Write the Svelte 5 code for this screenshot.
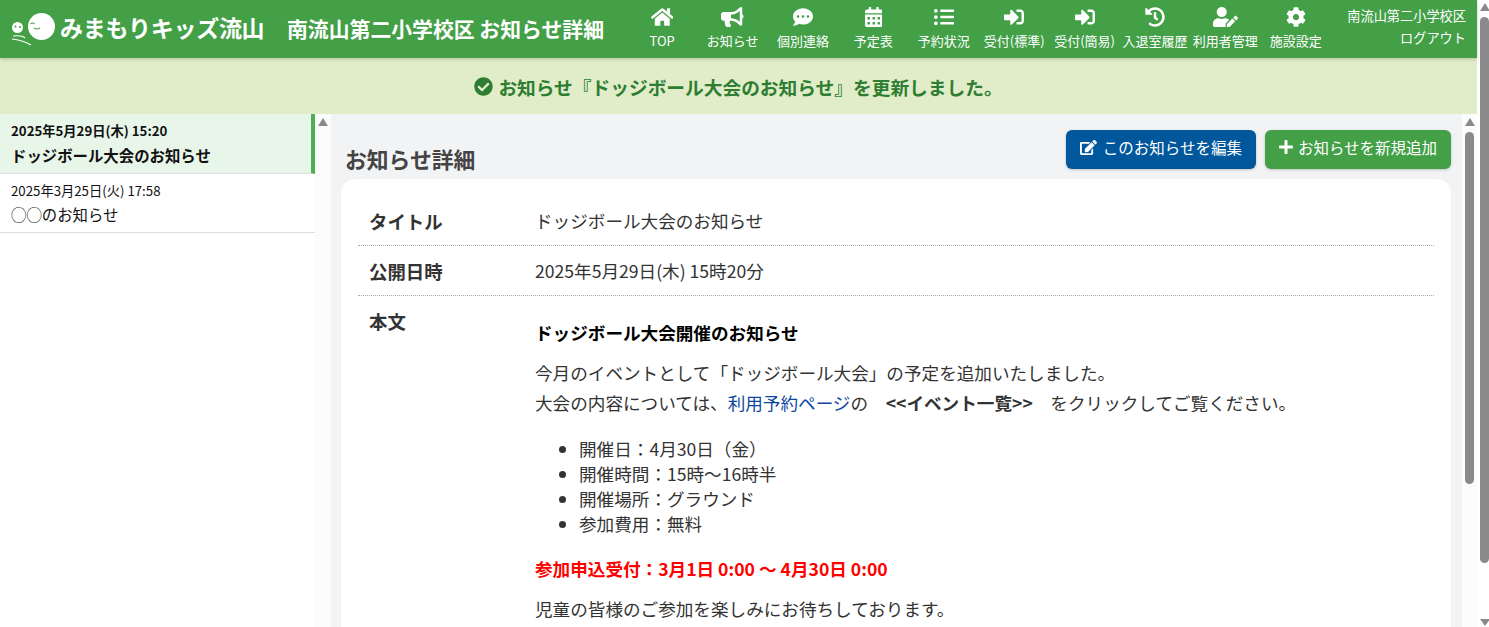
<script>
  const icons = {
    home: [576, "M280.37 148.26L96 300.11V464a16 16 0 0 0 16 16l112.06-.29a16 16 0 0 0 15.92-16V368a16 16 0 0 1 16-16h64a16 16 0 0 1 16 16v95.64a16 16 0 0 0 16 16.05L464 480a16 16 0 0 0 16-16V300L295.67 148.26a12.19 12.19 0 0 0-15.3 0zM571.6 251.47L488 182.56V44.05a12 12 0 0 0-12-12h-56a12 12 0 0 0-12 12v72.61L318.47 43a48 48 0 0 0-61 0L4.34 251.47a12 12 0 0 0-1.6 16.9l25.5 31A12 12 0 0 0 45.15 301l235.22-193.74a12.19 12.19 0 0 1 15.3 0L530.9 301a12 12 0 0 0 16.9-1.6l25.5-31a12 12 0 0 0-1.7-16.93z"],
    bullhorn: [576, "M576 240c0-23.63-12.95-44.04-32-55.12V32.01C544 23.26 537.02 0 512 0c-7.12 0-14.19 2.38-19.98 7.02l-85.03 68.03C364.28 109.19 310.66 128 256 128H64c-35.35 0-64 28.65-64 64v96c0 35.35 28.65 64 64 64h33.7c-1.39 10.48-2.18 21.14-2.18 32 0 39.77 9.26 77.35 25.56 110.94 5.19 10.69 16.52 17.06 28.4 17.06h74.28c26.05 0 41.69-29.84 25.9-50.56-16.4-21.52-26.15-48.36-26.15-77.44 0-11.11 1.62-21.79 4.41-32H256c54.66 0 108.28 18.81 150.98 52.95l85.03 68.03a32.023 32.023 0 0 0 19.98 7.02c24.92 0 32-22.78 32-32V295.13C563.05 284.04 576 263.63 576 240zm-96 141.42l-33.05-26.44C392.95 311.78 325.12 288 256 288v-96c69.12 0 136.95-23.78 190.95-66.98L480 98.58v282.84z"],
    comment: [512, "M256 32C114.6 32 0 125.1 0 240c0 49.6 21.4 95 57 130.7C44.5 421.1 2.7 466 2.2 466.5c-2.2 2.3-2.8 5.7-1.5 8.7S4.8 480 8 480c66.3 0 116-31.8 140.6-51.4 32.7 12.3 69 19.4 107.4 19.4 141.4 0 256-93.1 256-208S397.4 32 256 32zM128 272c-17.7 0-32-14.3-32-32s14.3-32 32-32 32 14.3 32 32-14.3 32-32 32zm128 0c-17.7 0-32-14.3-32-32s14.3-32 32-32 32 14.3 32 32-14.3 32-32 32zm128 0c-17.7 0-32-14.3-32-32s14.3-32 32-32 32 14.3 32 32-14.3 32-32 32z"],
    calendar: [448, "M0 464c0 26.5 21.5 48 48 48h352c26.5 0 48-21.5 48-48V192H0v272zm320-196c0-6.6 5.4-12 12-12h40c6.6 0 12 5.4 12 12v40c0 6.6-5.4 12-12 12h-40c-6.6 0-12-5.4-12-12v-40zm0 128c0-6.6 5.4-12 12-12h40c6.6 0 12 5.4 12 12v40c0 6.6-5.4 12-12 12h-40c-6.6 0-12-5.4-12-12v-40zM192 268c0-6.6 5.4-12 12-12h40c6.6 0 12 5.4 12 12v40c0 6.6-5.4 12-12 12h-40c-6.6 0-12-5.4-12-12v-40zm0 128c0-6.6 5.4-12 12-12h40c6.6 0 12 5.4 12 12v40c0 6.6-5.4 12-12 12h-40c-6.6 0-12-5.4-12-12v-40zM64 268c0-6.6 5.4-12 12-12h40c6.6 0 12 5.4 12 12v40c0 6.6-5.4 12-12 12H76c-6.6 0-12-5.4-12-12v-40zm0 128c0-6.6 5.4-12 12-12h40c6.6 0 12 5.4 12 12v40c0 6.6-5.4 12-12 12H76c-6.6 0-12-5.4-12-12v-40zM400 64h-48V16c0-8.8-7.2-16-16-16h-32c-8.8 0-16 7.2-16 16v48H160V16c0-8.8-7.2-16-16-16h-32c-8.8 0-16 7.2-16 16v48H48C21.5 64 0 85.5 0 112v48h448v-48c0-26.5-21.5-48-48-48z"],
    list: [512, "M48 48a48 48 0 1 0 48 48 48 48 0 0 0-48-48zm0 160a48 48 0 1 0 48 48 48 48 0 0 0-48-48zm0 160a48 48 0 1 0 48 48 48 48 0 0 0-48-48zm448 16H176a16 16 0 0 0-16 16v32a16 16 0 0 0 16 16h320a16 16 0 0 0 16-16v-32a16 16 0 0 0-16-16zm0-320H176a16 16 0 0 0-16 16v32a16 16 0 0 0 16 16h320a16 16 0 0 0 16-16V80a16 16 0 0 0-16-16zm0 160H176a16 16 0 0 0-16 16v32a16 16 0 0 0 16 16h320a16 16 0 0 0 16-16v-32a16 16 0 0 0-16-16z"],
    signin: [512, "M416 448h-84c-6.6 0-12-5.4-12-12v-40c0-6.6 5.4-12 12-12h84c17.7 0 32-14.3 32-32V160c0-17.7-14.3-32-32-32h-84c-6.6 0-12-5.4-12-12V76c0-6.6 5.4-12 12-12h84c53 0 96 43 96 96v192c0 53-43 96-96 96zm-47-201L201 79c-15-15-41-4.5-41 17v96H24c-13.3 0-24 10.7-24 24v96c0 13.3 10.7 24 24 24h136v96c0 21.5 26 32 41 17l168-168c9.3-9.4 9.3-24.6 0-34z"],
    history: [512, "M504 255.531c.253 136.64-111.18 248.372-247.82 248.468-59.015.042-113.223-20.53-155.822-54.911-11.077-8.94-11.905-25.541-1.839-35.607l11.267-11.267c8.609-8.609 22.353-9.551 31.891-1.984C173.062 425.135 212.781 440 256 440c101.705 0 184-82.311 184-184 0-101.705-82.311-184-184-184-48.814 0-93.149 18.969-126.068 49.932l50.754 50.754c10.08 10.08 2.941 27.314-11.313 27.314H24c-8.837 0-16-7.163-16-16V38.627c0-14.254 17.234-21.393 27.314-11.314l49.372 49.372C129.209 34.136 189.552 8 256 8c136.81 0 247.747 110.78 248 247.531zm-180.912 78.784l9.823-12.63c8.138-10.463 6.253-25.542-4.21-33.679L288 256.349V152c0-13.255-10.745-24-24-24h-16c-13.255 0-24 10.745-24 24v135.651l65.409 50.874c10.463 8.137 25.541 6.253 33.679-4.21z"],
    useredit: [640, "M224 256c70.7 0 128-57.3 128-128S294.7 0 224 0 96 57.3 96 128s57.3 128 128 128zm89.6 32h-16.7c-22.2 10.2-46.9 16-72.9 16s-50.6-5.8-72.9-16h-16.7C60.2 288 0 348.2 0 422.4V464c0 26.5 21.5 48 48 48h274.9c-2.4-6.8-3.4-14-2.6-21.3l6.8-60.9 1.2-11.1 7.9-7.9 77.3-77.3c-24.5-27.7-60-45.5-99.9-45.5zm45.3 145.3l-6.8 61c-1.1 10.2 7.5 18.8 17.6 17.6l60.9-6.8 137.9-137.9-71.7-71.7-137.9 137.8zM633 268.9L595.1 231c-9.3-9.3-24.5-9.3-33.8 0l-37.8 37.8-4.1 4.1 71.8 71.7 41.8-41.8c9.3-9.4 9.3-24.5 0-33.9z"],
    cog: [512, "M487.4 315.7l-42.6-24.6c4.3-23.2 4.3-47 0-70.2l42.6-24.6c4.9-2.8 7.1-8.6 5.5-14-11.1-35.6-30-67.8-54.7-94.6-3.8-4.1-10-5.1-14.8-2.3L380.8 110c-17.9-15.4-38.5-27.3-60.8-35.1V25.8c0-5.6-3.9-10.5-9.4-11.7-36.7-8.2-74.3-7.8-109.2 0-5.5 1.2-9.4 6.1-9.4 11.7V75c-22.2 7.9-42.8 19.8-60.8 35.1L88.7 85.5c-4.9-2.8-11-1.9-14.8 2.3-24.7 26.7-43.6 58.9-54.7 94.6-1.7 5.4.6 11.2 5.5 14L67.3 221c-4.3 23.2-4.3 47 0 70.2l-42.6 24.6c-4.9 2.8-7.1 8.6-5.5 14 11.1 35.6 30 67.8 54.7 94.6 3.8 4.1 10 5.1 14.8 2.3l42.6-24.6c17.9 15.4 38.5 27.3 60.8 35.1v49.2c0 5.6 3.9 10.5 9.4 11.7 36.7 8.2 74.3 7.8 109.2 0 5.5-1.2 9.4-6.1 9.4-11.7v-49.2c22.2-7.9 42.8-19.8 60.8-35.1l42.6 24.6c4.9 2.8 11 1.9 14.8-2.3 24.7-26.7 43.6-58.9 54.7-94.6 1.5-5.5-.7-11.3-5.6-14.1zM256 336c-44.1 0-80-35.9-80-80s35.9-80 80-80 80 35.9 80 80-35.9 80-80 80z"],
    check: [512, "M504 256c0 136.967-111.033 248-248 248S8 392.967 8 256 119.033 8 256 8s248 111.033 248 248zM227.314 387.314l184-184c6.248-6.248 6.248-16.379 0-22.627l-22.627-22.627c-6.248-6.249-16.379-6.249-22.628 0L216 308.118l-70.059-70.059c-6.248-6.248-16.379-6.248-22.628 0l-22.627 22.627c-6.248 6.248-6.248 16.379 0 22.627l104 104c6.249 6.249 16.379 6.249 22.628.001z"],
    edit: [576, "M402.6 83.2l90.2 90.2c3.8 3.8 3.8 10 0 13.8L274.4 405.6l-92.8 10.3c-12.4 1.4-22.9-9.1-21.5-21.5l10.3-92.8L388.8 83.2c3.8-3.8 10-3.8 13.8 0zm162-22.9l-48.8-48.8c-15.2-15.2-39.9-15.2-55.2 0l-35.4 35.4c-3.8 3.8-3.8 10 0 13.8l90.2 90.2c3.8 3.8 10 3.8 13.8 0l35.4-35.4c15.2-15.3 15.2-40 0-55.2zM384 346.2V448H64V128h229.8c3.2 0 6.2-1.3 8.5-3.5l40-40c7.6-7.6 2.2-20.5-8.5-20.5H48C21.5 64 0 85.5 0 112v352c0 26.5 21.5 48 48 48h352c26.5 0 48-21.5 48-48V306.2c0-10.7-12.9-16-20.5-8.5l-40 40c-2.2 2.3-3.5 5.3-3.5 8.5z"],
    plus: [448, "M416 208H272V64c0-17.67-14.33-32-32-32h-32c-17.67 0-32 14.33-32 32v144H32c-17.67 0-32 14.33-32 32v32c0 17.67 14.33 32 32 32h144v144c0 17.67 14.33 32 32 32h32c17.67 0 32-14.33 32-32V304h144c17.67 0 32-14.33 32-32v-32c0-17.67-14.33-32-32-32z"]
  };

  const nav = [
    ["home", "TOP"],
    ["bullhorn", "お知らせ"],
    ["comment", "個別連絡"],
    ["calendar", "予定表"],
    ["list", "予約状況"],
    ["signin", "受付(標準)"],
    ["signin", "受付(簡易)"],
    ["history", "入退室履歴"],
    ["useredit", "利用者管理"],
    ["cog", "施設設定"]
  ];

  const notices = [
    { date: "2025年5月29日(木) 15:20", title: "ドッジボール大会のお知らせ", active: true },
    { date: "2025年3月25日(火) 17:58", title: "◯◯のお知らせ", active: false }
  ];

  const details = ["開催日：4月30日（金）", "開催時間：15時～16時半", "開催場所：グラウンド", "参加費用：無料"];
</script>

{#snippet icon(name, cls)}
  <svg class={cls} viewBox="0 0 {icons[name][0]} 512" aria-hidden="true"><path fill="currentColor" d={icons[name][1]} /></svg>
{/snippet}

<div class="screen">
  <div class="page">
    <header class="topbar">
      <div class="logo">
        <svg class="mascot" viewBox="0 0 46 33" aria-hidden="true">
          <ellipse cx="31.5" cy="13.5" rx="13.5" ry="13.5" fill="#fff" />
          <circle cx="7.5" cy="14.5" r="5.5" fill="#fff" />
          <path d="M20.5 11q2 -2 4 0M24 15q3 2 6 0" stroke="#43a047" stroke-width="1.1" fill="none" />
          <circle cx="5.5" cy="13.5" r="1" fill="#43a047" />
          <circle cx="10" cy="14" r="1" fill="#43a047" />
          <path d="M3 23q9 -1 12 2M2 26q10 1 19 6" stroke="#fff" stroke-width="1.1" fill="none" />
        </svg>
        <span class="logo-text">みまもりキッズ流山</span>
      </div>
      <h1 class="page-title">南流山第二小学校区 お知らせ詳細</h1>
      <nav class="nav">
        {#each nav as [name, label]}
          <div class="nav-item">
            <span class="nav-icon">{@render icon(name, "nav-svg")}</span>
            <span class="nav-label">{label}</span>
          </div>
        {/each}
      </nav>
      <div class="account">
        <span>南流山第二小学校区</span>
        <span>ログアウト</span>
      </div>
    </header>

    <div class="flash">
      {@render icon("check", "flash-icon")}
      <span>お知らせ『ドッジボール大会のお知らせ』を更新しました。</span>
    </div>

    <div class="columns">
      <aside class="list">
        {#each notices as n}
          <div class="notice" class:active={n.active}>
            <div class="notice-date">{n.date}</div>
            <div class="notice-title">{n.title}</div>
          </div>
        {/each}
      </aside>
      <div class="bar bar-side"><i class="up"></i></div>

      <main class="content">
        <div class="content-head">
          <h2>お知らせ詳細</h2>
          <div class="actions">
            <button class="btn blue">{@render icon("edit", "btn-icon")}このお知らせを編集</button>
            <button class="btn green">{@render icon("plus", "btn-icon plus")}お知らせを新規追加</button>
          </div>
        </div>
        <section class="card">
          <div class="row">
            <div class="key">タイトル</div>
            <div class="val">ドッジボール大会のお知らせ</div>
          </div>
          <div class="row">
            <div class="key">公開日時</div>
            <div class="val">2025年5月29日(木) 15時20分</div>
          </div>
          <div class="row last">
            <div class="key">本文</div>
            <div class="val body-text">
              <p class="lead"><strong>ドッジボール大会開催のお知らせ</strong></p>
              <p class="intro">今月のイベントとして「ドッジボール大会」の予定を追加いたしました。<br />大会の内容については、<span class="link">利用予約ページ</span>の　<strong>&lt;&lt;イベント一覧&gt;&gt;</strong>　をクリックしてご覧ください。</p>
              <ul>
                {#each details as d}<li>{d}</li>{/each}
              </ul>
              <p class="red"><strong>参加申込受付：3月1日 0:00 ～ 4月30日 0:00</strong></p>
              <p>児童の皆様のご参加を楽しみにお待ちしております。</p>
            </div>
          </div>
        </section>
      </main>
      <div class="bar bar-main"><i class="up"></i><b class="thumb"></b></div>
    </div>
  </div>
  <div class="bar bar-page"><i class="up"></i><b class="thumb"></b><i class="down"></i></div>
</div>

<style>
  :global(body) {
    margin: 0;
    overflow: hidden;
    background: #fff;
  }
  .screen {
    display: flex;
    justify-content: space-between;
    width: 1489px;
    height: 627px;
    overflow: hidden;
    font-family: "Noto Sans CJK JP", "Noto Sans", sans-serif;
    color: #333;
  }
  .page {
    display: flex;
    flex-direction: column;
    width: 1477px;
    height: 627px;
  }

  /* header */
  .topbar {
    position: relative;
    z-index: 2;
    display: flex;
    align-items: center;
    flex: none;
    height: 58px;
    background: #43a047;
    color: #fff;
    box-shadow: 0 1px 4px rgba(0, 0, 0, 0.2);
  }
  .logo {
    display: flex;
    align-items: center;
    width: 287px;
    padding-left: 10px;
    box-sizing: border-box;
  }
  .mascot {
    width: 46px;
    height: 33px;
    flex: none;
    margin-right: 4px;
  }
  .logo-text {
    margin-bottom: 4px;
    font-size: 23px;
    font-weight: 700;
    letter-spacing: -0.3px;
    line-height: 1;
    white-space: nowrap;
  }
  .page-title {
    width: 340px;
    margin: 0 0 2px;
    font-size: 20.85px;
    font-weight: 700;
    white-space: nowrap;
  }
  .nav {
    display: grid;
    grid-template-columns: repeat(10, 70.4px);
  }
  .nav-item {
    display: flex;
    flex-direction: column;
    align-items: center;
    margin-bottom: 2px;
    white-space: nowrap;
  }
  .nav-icon {
    display: flex;
    align-items: center;
    height: 24px;
  }
  .nav-svg {
    height: 20px;
  }
  .nav-label {
    margin-top: 2px;
    font-size: 13px;
    line-height: 20px;
  }
  .account {
    display: flex;
    flex-direction: column;
    align-items: flex-end;
    flex: 1;
    margin-bottom: 4px;
    padding-right: 11px;
    font-size: 13.2px;
    line-height: 22px;
  }

  /* flash */
  .flash {
    display: flex;
    align-items: center;
    justify-content: center;
    flex: none;
    gap: 5px;
    height: 56px;
    background: #e1edc8;
    color: #2e7d32;
    font-size: 18.72px;
    font-weight: 700;
  }
  .flash-icon {
    width: 19px;
    height: 19px;
  }

  .columns {
    display: flex;
    flex: 1;
    min-height: 0;
  }

  /* left list */
  .list {
    flex: none;
    width: 315px;
    background: #fff;
  }
  .notice {
    box-sizing: border-box;
    height: 60px;
    padding: 6px 11px 0;
    border-bottom: 1px solid #ddd;
    color: #111;
  }
  .notice:not(.active) {
    height: 59px;
  }
  .notice:not(.active) .notice-title {
    margin-top: 0;
  }
  .notice.active {
    background: #e8f5e9;
    border-right: 4px solid #4caf50;
  }
  .notice.active div {
    font-weight: 700;
  }
  .notice-date {
    font-size: 13.25px;
    line-height: 22px;
  }
  .notice-title {
    margin-top: 1px;
    font-size: 15.4px;
    line-height: 24px;
  }

  /* scrollbars */
  .bar {
    display: flex;
    flex-direction: column;
    align-items: center;
    flex: none;
    background: #fcfcfc;
    height: 100%;
  }
  .bar-side {
    width: 16px;
    padding-top: 4px;
    box-sizing: border-box;
  }
  .bar-main {
    width: 15px;
    padding-top: 4px;
    box-sizing: border-box;
  }
  .bar-main .thumb {
    height: 352px;
    margin-top: 6px;
  }
  .bar-page {
    width: 9px;
    padding-top: 3px;
    box-sizing: border-box;
    height: 627px;
    background: #fff;
  }
  .bar-page .thumb {
    height: 546px;
    margin-top: 6px;
  }
  .bar-page .down {
    margin-top: 56px;
  }
  .thumb {
    display: block;
    flex: none;
    width: 9px;
    background: #8a8a8a;
    border-radius: 5px;
  }
  .up,
  .down {
    display: block;
    flex: none;
    width: 0;
    height: 0;
    border-left: 5px solid transparent;
    border-right: 5px solid transparent;
  }
  .up {
    border-bottom: 8px solid #8a8a8a;
  }
  .down {
    border-top: 7px solid #8a8a8a;
  }

  /* main */
  .content {
    flex: 1;
    min-width: 0;
    background: #f1f3f5;
    padding: 0 11px 0 10px;
    overflow: hidden;
  }
  .content-head {
    display: flex;
    align-items: flex-end;
    justify-content: space-between;
    height: 65px;
    padding-left: 4px;
  }
  .content-head h2 {
    margin: 0 0 5px;
    font-size: 21.8px;
    font-weight: 700;
    line-height: 30px;
    color: #444;
  }
  .actions {
    display: flex;
    gap: 9px;
    margin-bottom: 10px;
  }
  .btn {
    display: flex;
    align-items: center;
    justify-content: center;
    box-sizing: border-box;
    height: 39px;
    padding: 0 0 5px;
    border: 0;
    border-radius: 6px;
    color: #fff;
    font: 400 15.5px "Noto Sans CJK JP", sans-serif;
    box-shadow: 0 1px 3px rgba(0, 0, 0, 0.2);
  }
  .blue {
    width: 190px;
    background: #01579b;
  }
  .green {
    width: 186px;
    background: #43a047;
  }
  .btn-icon {
    height: 15px;
    margin-right: 6px;
  }
  .btn-icon.plus {
    height: 16px;
    margin-right: 5px;
  }
  .card {
    box-sizing: border-box;
    padding: 17px 17px 0;
    background: #fff;
    border-radius: 14px;
    height: 480px;
  }
  .row {
    display: grid;
    grid-template-columns: 177px 1fr;
    box-sizing: border-box;
    border-bottom: 1px dotted #aaa;
    height: 50px;
  }
  .row.last {
    border-bottom: 0;
    height: auto;
  }
  .key {
    padding-left: 11px;
    font-size: 18.4px;
    font-weight: 700;
    line-height: 50px;
    color: #333;
  }
  .val {
    font-size: 17.6px;
    line-height: 50px;
  }
  .body-text {
    line-height: 30px;
    padding-top: 22px;
  }
  .body-text p {
    margin: 0 0 10px;
  }
  .body-text strong {
    font-weight: 700;
  }
  .lead {
    color: #000;
  }
  .link {
    color: #0d47a1;
  }
  ul {
    margin: 18px 0 18px;
    padding-left: 44px;
    line-height: 25px;
  }
  .red {
    color: #f00;
  }
</style>
